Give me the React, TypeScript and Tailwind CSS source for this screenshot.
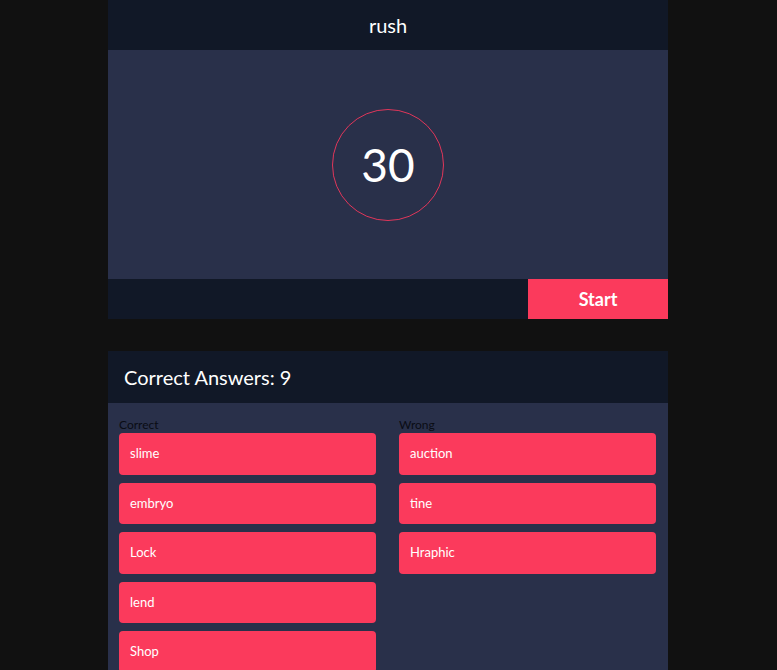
const CORRECT = ["slime", "embryo", "Lock", "lend", "Shop"];
const WRONG = ["auction", "tine", "Hraphic"];

function WordList({ label, words }: { label: string; words: string[] }) {
  return (
    <div className="flex flex-col">
      <span className="text-xs leading-4 text-[#0a0c14]">{label}</span>
      <div className="flex flex-col gap-2">
        {words.map((w) => (
          <div
            key={w}
            className="h-[41.5px] flex items-center px-[11px] rounded bg-[#fb3a5c] text-white text-[13px]"
          >
            {w}
          </div>
        ))}
      </div>
    </div>
  );
}

export default function App() {
  return (
    <div
      className="min-h-screen bg-[#111111]"
      style={{ fontFamily: "Lato, 'Open Sans', sans-serif" }}
    >
      <div className="w-[560px] ml-[calc(50%-280.5px)]">
        {/* timer card */}
        <div>
          <div className="h-[50px] flex items-center justify-center bg-[#111827] text-white text-xl">
            rush
          </div>
          <div className="h-[229px] flex items-center justify-center bg-[#29304a]">
            <div className="w-[112px] h-[112px] rounded-full border border-[#e0365a] flex items-center justify-center text-white text-[46px]">
              30
            </div>
          </div>
          <div className="h-10 flex justify-end bg-[#111827]">
            <button className="w-[140px] h-full bg-[#fb3a5c] text-white text-lg font-bold">
              Start
            </button>
          </div>
        </div>

        {/* results card */}
        <div className="mt-8">
          <div className="h-[52px] flex items-center px-4 bg-[#111827] text-white text-xl">
            Correct Answers: 9
          </div>
          <div className="bg-[#29304a] pl-[11px] pr-3 pt-[14px] pb-6 grid grid-cols-2 gap-[23px]">
            <WordList label="Correct" words={CORRECT} />
            <WordList label="Wrong" words={WRONG} />
          </div>
        </div>
      </div>
    </div>
  );
}
